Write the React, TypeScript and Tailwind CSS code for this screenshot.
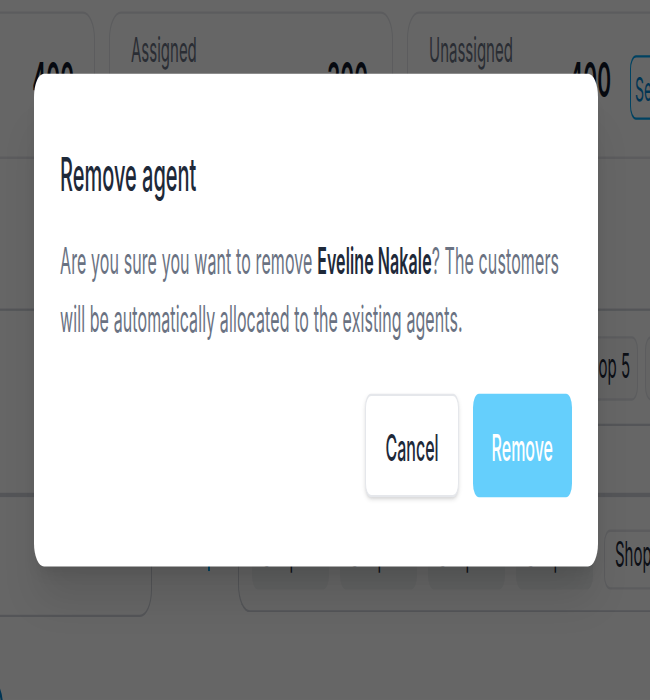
export default function App() {
  const bottomChips = ["Shop 1", "Shop 2", "Shop 3", "Shop 4"];
  const rowChips = ["Shop 1", "Shop 2", "Shop 3", "Shop 4", "Shop 5", "Shop 6"];
  return (
    <div className="w-[650px] h-[700px] overflow-hidden bg-white">
      <div className="relative w-[650px] h-[304px] origin-top-left scale-y-[2.3026] font-['Inter',sans-serif]">
        {/* Page behind the dialog */}
        <div className="flex flex-col">
          {/* Stats row */}
          <div className="mt-[5px] flex gap-[14px] -ml-[105px]">
            <div className="w-[200px] h-[64px] shrink-0 rounded-xl border border-gray-200 bg-white pr-[20px] pt-[15px] flex justify-end">
              <span className="text-[21px] leading-[28px] font-semibold text-gray-900">400</span>
            </div>
            <div className="w-[284px] h-[64px] shrink-0 rounded-xl border border-gray-200 bg-white pl-[21px] pr-[24px] pt-[6px] flex justify-between">
              <span className="text-[15px] leading-[20px] text-gray-500">Assigned</span>
              <span className="mt-[9px] text-[21px] leading-[28px] font-semibold text-gray-900">300</span>
            </div>
            <div className="w-[320px] h-[64px] shrink-0 rounded-xl border border-gray-200 bg-white pl-[21px] pt-[6px] flex">
              <div className="w-[182px] shrink-0 flex justify-between">
                <span className="text-[15px] leading-[20px] text-gray-500">Unassigned</span>
                <span className="mt-[9px] text-[21px] leading-[28px] font-semibold text-gray-900">400</span>
              </div>
              <button className="ml-[19px] mt-[12px] h-[28px] rounded-md border border-sky-500 px-[4px] text-[14px] text-sky-600">
                See all
              </button>
            </div>
          </div>

          {/* Table rows */}
          <div className="h-[66px] border-b border-gray-300" />
          <div className="h-[50px] border-b border-gray-300 flex items-center gap-[7px] ml-[280px]">
            {rowChips.map((c) => (
              <span
                key={c}
                className="w-[66px] h-[28px] shrink-0 rounded-md border border-gray-200 bg-gray-50 flex items-center justify-center text-[15px] text-gray-800"
              >
                {c}
              </span>
            ))}
          </div>
          <div className="h-[31px] border-b-2 border-gray-300" />

          {/* Bottom section */}
          <div className="flex">
            <div className="-ml-[40px] w-[192px] h-[52px] shrink-0 rounded-b-xl border border-t-0 border-gray-300 bg-white" />
            <div className="w-[86px] shrink-0 flex">
              <span className="ml-[56px] mt-[27px] w-[2px] h-[5px] bg-sky-500" />
            </div>
            <div className="flex-1 h-[50px] rounded-bl-xl border border-t-0 border-gray-300 bg-white pl-[13px] pt-[14px] flex gap-[11px]">
              {bottomChips.map((c) => (
                <span
                  key={c}
                  className="w-[77px] h-[26px] shrink-0 rounded-md bg-gray-100 flex items-start pt-[1px] pl-[10px] text-[15px] leading-[20px] text-gray-800"
                >
                  {c}
                </span>
              ))}
              <span className="w-[77px] h-[26px] shrink-0 rounded-md border border-gray-200 bg-white flex items-start pl-[10px] text-[15px] leading-[20px] text-gray-800">
                Shop 5
              </span>
            </div>
          </div>
          <div className="mt-[27px] -ml-[21px] w-[24px] h-[24px] rounded-full border-2 border-sky-600" />
        </div>

        {/* Overlay + dialog */}
        <div className="absolute inset-0 bg-black/60" />
        <div className="absolute left-[34px] top-[32px] w-[564px] rounded-[10px] bg-white shadow-xl px-[26px] pt-[30px] pb-[30px]">
          <h2 className="text-[20px] leading-[28px] font-medium text-gray-800">Remove agent</h2>
          <p className="mt-[11px] text-[16px] leading-[25px] tracking-[0.1px] text-gray-500">
            Are you sure you want to remove{" "}
            <span className="font-semibold text-gray-800">Eveline Nakale</span>? The customers will be
            automatically allocated to the existing agents.
          </p>
          <div className="mt-[20px] flex justify-end gap-[14px]">
            <button className="h-[45px] px-[19px] rounded-md border border-gray-200 bg-white shadow-sm text-[16px] font-medium text-gray-800">
              Cancel
            </button>
            <button className="h-[45px] px-[19px] rounded-md bg-[#65cffc] text-[16px] font-medium text-white">
              Remove
            </button>
          </div>
        </div>
      </div>
    </div>
  );
}
